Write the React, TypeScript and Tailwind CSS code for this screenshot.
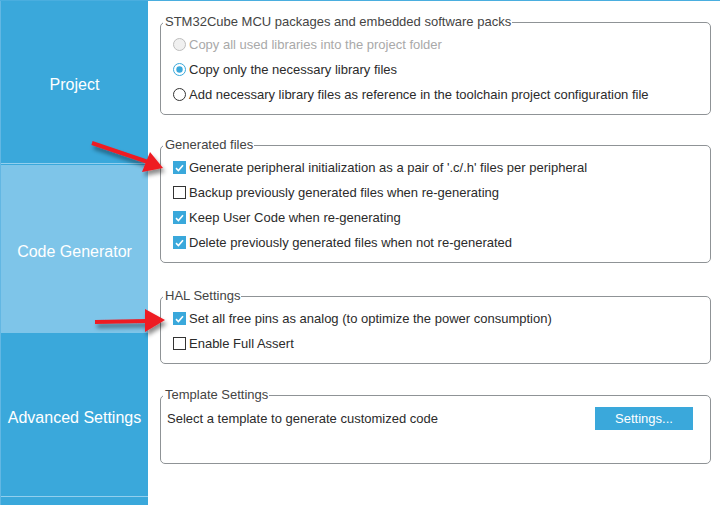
import React from "react";

const BLUE = "#3aa8db";

function Check({ on }: { on: boolean }) {
  if (!on) {
    return <span className="w-[13px] h-[13px] shrink-0 border border-[#333] bg-white" />;
  }
  return (
    <span className="w-[13px] h-[13px] shrink-0 bg-[#3aa8db] flex items-center justify-center">
      <svg width="9" height="8" viewBox="0 0 9 8">
        <path d="M1 4.2 L3.4 6.5 L8 1.2" fill="none" stroke="white" strokeWidth="1.6" />
      </svg>
    </span>
  );
}

function Radio({ on, disabled }: { on?: boolean; disabled?: boolean }) {
  return (
    <svg width="13" height="13" viewBox="0 0 13 13" className="shrink-0">
      <circle
        cx="6.5"
        cy="6.5"
        r="6"
        fill={disabled ? "#f0f0f0" : "white"}
        stroke={disabled ? "#bcbcbc" : on ? BLUE : "#333"}
        strokeWidth="1"
      />
      {on && <circle cx="6.5" cy="6.5" r="3.2" fill={BLUE} />}
    </svg>
  );
}

function Group({
  title,
  children,
  className = "",
}: {
  title: string;
  children: React.ReactNode;
  className?: string;
}) {
  return (
    <fieldset
      className={`border border-[#8f9396] rounded-[5px] px-[12px] pt-[2px] pb-[7px] ${className}`}
    >
      <legend className="ml-[-10px] px-[2px] pr-px leading-[16px] text-[#444]">{title}</legend>
      {children}
    </fieldset>
  );
}

function Row({ box, label, muted }: { box: React.ReactNode; label: string; muted?: boolean }) {
  return (
    <div className="h-[25px] flex items-center gap-[3px]">
      {box}
      <span className={muted ? "text-[#a9a9a9]" : "text-[#2b2b2b]"}>{label}</span>
    </div>
  );
}

export default function App() {
  return (
    <div
      className="relative w-[720px] h-[505px] overflow-hidden bg-white flex border-t border-[#4aaedf] text-[13px]"
      style={{ fontFamily: '"Liberation Sans", Arial, sans-serif' }}
    >
      {/* SIDEBAR */}
      <div className="w-[148px] shrink-0 flex flex-col text-white text-[16px] border-l border-[#62b7e3]">
        <div className="h-[162px] bg-[#3aa8db] flex items-center justify-center pt-[6px]">Project</div>
        <div className="h-px bg-[#92cfee]" />
        <div className="h-px bg-[#3aa8db]" />
        <div className="h-[168px] bg-[#7ec5e9] flex items-center justify-center pt-[6px]">
          Code Generator
        </div>
        <div className="h-[163px] bg-[#3aa8db] flex items-center justify-center pt-[6px]">
          Advanced Settings
        </div>
        <div className="h-px bg-[#92cfee]" />
        <div className="flex-1 bg-[#3aa8db]" />
      </div>

      {/* SETTINGS */}
      <div className="flex-1 pl-[12px] pr-[9px] pt-[13px] flex flex-col">
        <Group title="STM32Cube MCU packages and embedded software packs">
          <Row box={<Radio disabled />} label="Copy all used libraries into the project folder" muted />
          <Row box={<Radio on />} label="Copy only the necessary library files" />
          <Row
            box={<Radio />}
            label="Add necessary library files as reference in the toolchain project configuration file"
          />
        </Group>

        <Group title="Generated files" className="mt-[22px]">
          <Row
            box={<Check on />}
            label="Generate peripheral initialization as a pair of '.c/.h' files per peripheral"
          />
          <Row box={<Check on={false} />} label="Backup previously generated files when re-generating" />
          <Row box={<Check on />} label="Keep User Code when re-generating" />
          <Row box={<Check on />} label="Delete previously generated files when not re-generated" />
        </Group>

        <Group title="HAL Settings" className="mt-[25px]">
          <Row box={<Check on />} label="Set all free pins as analog (to optimize the power consumption)" />
          <Row box={<Check on={false} />} label="Enable Full Assert" />
        </Group>

        <fieldset className="mt-[23px] border border-[#8f9396] rounded-[5px] pl-[6px] pr-[17px] pt-[4px] pb-[33px]">
          <legend className="ml-[-4px] px-[2px] pr-px leading-[16px] text-[#444]">Template Settings</legend>
          <div className="flex items-center justify-between">
            <span className="text-[#2b2b2b]">Select a template to generate customized code</span>
            <button className="w-[98px] h-[23px] bg-[#3aa8db] text-white text-[13px]">Settings...</button>
          </div>
        </fieldset>
      </div>

      {/* ANNOTATION ARROWS */}
      <svg className="absolute inset-0 pointer-events-none" width="720" height="505">
        <defs>
          <filter id="sh" x="-20%" y="-50%" width="140%" height="200%">
            <feDropShadow dx="2" dy="4" stdDeviation="2" floodColor="#000" floodOpacity="0.45" />
          </filter>
        </defs>
        <g filter="url(#sh)" fill="#ee1c24" stroke="#ee1c24">
          <line x1="92" y1="142" x2="148" y2="161" strokeWidth="4" />
          <polygon points="163,167 142,171 150,151" strokeWidth="0" />
          <line x1="95" y1="321" x2="147" y2="320" strokeWidth="4" />
          <polygon points="165,319 145,308 145,331" strokeWidth="0" />
        </g>
      </svg>
    </div>
  );
}
